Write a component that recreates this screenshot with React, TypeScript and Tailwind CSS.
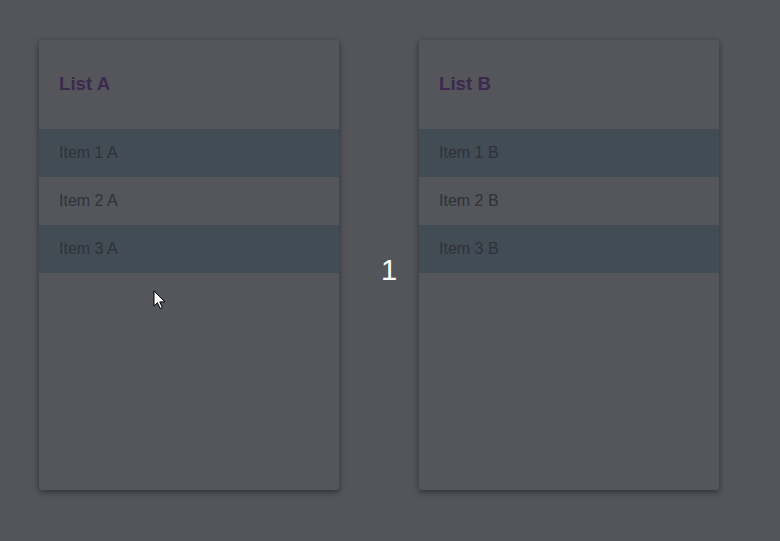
import React from 'react';

const items = ['Item 1', 'Item 2', 'Item 3'];

const ListCard = ({ name }: { name: string }) => (
  <div className="flex h-[450px] w-[300px] flex-col rounded-[3px] bg-[#54565c] shadow-[0_2px_6px_rgba(0,0,0,0.45)]">
    <div className="flex h-[89px] items-center px-5">
      <h2 className="text-[18.7px] font-bold text-[#3c2a4e]">List {name}</h2>
    </div>
    {items.map((it, i) => (
      <div
        key={it}
        className={`flex h-12 items-center px-5 text-base text-[#2f3237] ${i % 2 === 0 ? 'bg-[#414c55]' : ''}`}
      >
        {it} {name}
      </div>
    ))}
  </div>
);

const Cursor = () => (
  <svg className="absolute left-[153px] top-[290px]" width="14" height="20" viewBox="0 0 14 20" fill="none">
    <path d="M1 1v15l3.5-3.3 2.6 5.8 2.2-1-2.5-5.6H12L1 1Z" fill="white" stroke="black" strokeWidth="1" strokeLinejoin="round" />
  </svg>
);

export default function App() {
  return (
    <div
      className="relative flex h-[541px] w-[780px] bg-[#53555b] pl-[39px] pt-[40px]"
      style={{ fontFamily: '"Liberation Sans", Arial, sans-serif' }}
    >
      <ListCard name="A" />
      <div className="flex w-[80px] items-start justify-center pl-[20px] pt-[216px]">
        <span className="text-[29px] leading-none text-white">1</span>
      </div>
      <ListCard name="B" />
      <Cursor />
    </div>
  );
}
